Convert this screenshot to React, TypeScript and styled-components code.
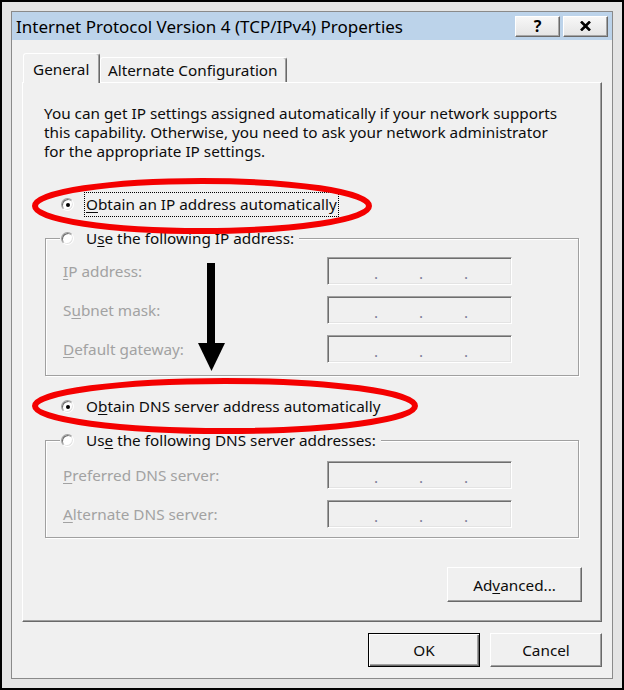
import React from "react";
import styled, { createGlobalStyle, css } from "styled-components";

const FONT = `"Noto Sans", "Open Sans", "DejaVu Sans", sans-serif`;

const GlobalStyle = createGlobalStyle`
  html, body { margin: 0; padding: 0; background: #fff; }
  * { box-sizing: border-box; }
`;

const Frame = styled.div`
  position: relative;
  width: 624px;
  height: 690px;
  border: 2px solid #000;
  background: #e4e4e4;
  padding: 9px;
  font-family: ${FONT};
  font-size: 15.3px;
  color: #0c0c0c;
`;

const Window = styled.div`
  height: 100%;
  display: flex;
  flex-direction: column;
  border: 1px solid #8a8a8a;
  background: #f0f0f0;
`;

const TitleBar = styled.div`
  height: 28px;
  flex: none;
  display: flex;
  align-items: center;
  justify-content: space-between;
  padding: 0 4px;
  background: #bcd3ea;
`;

const Title = styled.span`
  font-size: 17px;
  color: #000;
  white-space: nowrap;
`;

const CaptionButtons = styled.div`
  display: flex;
  gap: 3px;
`;

const CaptionButton = styled.div`
  width: 45px;
  height: 21px;
  display: flex;
  align-items: center;
  justify-content: center;
  background: linear-gradient(#f7f7f7, #e4e4e4);
  border: 1px solid;
  border-color: #fff #6a6a6a #6a6a6a #fff;
  box-shadow: inset -1px -1px #a6a6a6;
  font: bold 16px ${FONT};
  color: #000;
  line-height: 1;
`;

const Body = styled.div`
  flex: 1;
  display: flex;
  flex-direction: column;
  padding: 13px 10px 11px 10px;
`;

const TabStrip = styled.div`
  display: flex;
  align-items: flex-end;
  height: 29px;
  padding-left: 1px;
  position: relative;
  z-index: 1;
`;

const Tab = styled.div<{ $active?: boolean }>`
  display: flex;
  align-items: center;
  white-space: nowrap;
  background: #f0f0f0;
  border: 1px solid;
  border-bottom: none;
  border-color: #fff #696969 transparent #fff;
  box-shadow: inset -1px 0 #a0a0a0;
  border-radius: 3px 3px 0 0;
  ${(p) =>
    p.$active
      ? css`
          width: 77px;
          height: 30px;
          margin-bottom: -1px;
          padding-left: 9px;
        `
      : css`
          width: 187px;
          height: 25px;
          padding-left: 7px;
        `}
`;

const Panel = styled.div`
  height: 540px;
  flex: none;
  display: flex;
  flex-direction: column;
  border: 1px solid;
  border-color: #fff #696969 #696969 #fff;
  box-shadow: inset -1px -1px #a0a0a0;
  padding: 21px 19px 19px 21px;
`;

const Intro = styled.div`
  line-height: 19px;
`;

const Line = styled.span`
  display: block;
  white-space: nowrap;
`;

const RadioRow = styled.div<{ $legend?: boolean; $mt?: number }>`
  display: flex;
  align-items: center;
  gap: 10px;
  height: 25px;
  white-space: nowrap;
  ${(p) =>
    p.$legend
      ? css`
          width: fit-content;
          margin: -13px 0 0 -3px;
          padding: 0 3px 0 1px;
          background: #f0f0f0;
        `
      : css`
          margin: ${p.$mt ?? 0}px 0 0 17px;
        `}
`;

const RadioCircle = styled.span<{ $checked?: boolean }>`
  width: 13px;
  height: 13px;
  flex: none;
  border-radius: 50%;
  background: #fff;
  border: 1px solid;
  border-color: #a0a0a0 #fff #fff #a0a0a0;
  box-shadow: inset 1px 1px #6e6e6e, inset -1px -1px #e3e3e3;
  display: flex;
  align-items: center;
  justify-content: center;
  &::after {
    content: "";
    width: 4px;
    height: 4px;
    border-radius: 50%;
    background: #000;
    display: ${(p) => (p.$checked ? "block" : "none")};
  }
`;

const RadioLabel = styled.span<{ $focus?: boolean }>`
  display: inline-block;
  height: 25px;
  line-height: 23px;
  padding: 0 1px;
  border: 1px dotted ${(p) => (p.$focus ? "#000" : "transparent")};
`;

const Key = styled.u`
  text-decoration: underline;
  text-underline-offset: 2px;
  text-decoration-thickness: 1px;
`;

const GroupBox = styled.div<{ $mt: number; $pb: number }>`
  margin: ${(p) => p.$mt}px 0 0 1px;
  width: 534px;
  border: 1px solid #a0a0a0;
  box-shadow: inset 1px 1px #fff, 1px 1px #fff;
  padding: 0 0 ${(p) => p.$pb}px 17px;
`;

const FieldGrid = styled.div<{ $mt: number }>`
  margin-top: ${(p) => p.$mt}px;
  display: grid;
  grid-template-columns: 264px 185px;
  row-gap: 11px;
  align-items: center;
`;

const FieldLabel = styled.span`
  color: #a2a2a2;
  white-space: nowrap;
`;

const IpField = styled.div`
  height: 28px;
  width: 185px;
  display: flex;
  align-items: center;
  gap: 41px;
  padding: 5px 0 0 46px;
  background: #f0f0f0;
  border: 1px solid;
  border-color: #a0a0a0 #fff #fff #a0a0a0;
  box-shadow: inset 1px 1px #6e6e6e, inset -1px -1px #e3e3e3;
`;

const Dot = styled.span`
  width: 4px;
  text-align: center;
  color: #7d7d98;
  line-height: 1;
`;

const Button = styled.div<{ $default?: boolean; $w: number; $h: number }>`
  width: ${(p) => p.$w}px;
  height: ${(p) => p.$h}px;
  display: flex;
  align-items: center;
  justify-content: center;
  background: #f0f0f0;
  white-space: nowrap;
  ${(p) =>
    p.$default
      ? css`
          border: 1px solid #000;
          box-shadow: inset 1px 1px #fff, inset -1px -1px #696969,
            inset -2px -2px #a0a0a0;
        `
      : css`
          border: 1px solid;
          border-color: #fff #696969 #696969 #fff;
          box-shadow: inset -1px -1px #a0a0a0;
        `}
`;

const ButtonText = styled.span`
  white-space: pre;
`;

const AdvancedButton = styled(Button)`
  margin-top: 29px;
  align-self: flex-end;
`;

const ButtonRow = styled.div`
  margin-top: 11px;
  display: flex;
  justify-content: flex-end;
  gap: 10px;
`;

const Annotations = styled.svg`
  position: absolute;
  top: -2px;
  left: -2px;
  width: 624px;
  height: 690px;
  pointer-events: none;
`;

const Ip = () => (
  <IpField>
    <Dot>.</Dot>
    <Dot>.</Dot>
    <Dot>.</Dot>
  </IpField>
);

export default function App() {
  return (
    <>
      <GlobalStyle />
      <Frame>
        <Window>
          <TitleBar>
            <Title>Internet Protocol Version 4 (TCP/IPv4) Properties</Title>
            <CaptionButtons>
              <CaptionButton>?</CaptionButton>
              <CaptionButton>
                <svg width="11" height="10" viewBox="0 0 11 10">
                  <path d="M1 0.5 L10 9.5 M10 0.5 L1 9.5" stroke="#000" strokeWidth="2.6" />
                </svg>
              </CaptionButton>
            </CaptionButtons>
          </TitleBar>
          <Body>
            <TabStrip>
              <Tab $active>General</Tab>
              <Tab>Alternate Configuration</Tab>
            </TabStrip>
            <Panel>
              <Intro>
                <Line>You can get IP settings assigned automatically if your network supports</Line>
                <Line>this capability. Otherwise, you need to ask your network administrator</Line>
                <Line>for the appropriate IP settings.</Line>
              </Intro>

              <RadioRow $mt={31}>
                <RadioCircle $checked />
                <RadioLabel $focus>
                  <Key>O</Key>btain an IP address automatically
                </RadioLabel>
              </RadioRow>

              <GroupBox $mt={21} $pb={12}>
                <RadioRow $legend>
                  <RadioCircle />
                  <RadioLabel>
                    U<Key>s</Key>e the following IP address:
                  </RadioLabel>
                </RadioRow>
                <FieldGrid $mt={6}>
                  <FieldLabel>
                    <Key>I</Key>P address:
                  </FieldLabel>
                  <Ip />
                  <FieldLabel>
                    S<Key>u</Key>bnet mask:
                  </FieldLabel>
                  <Ip />
                  <FieldLabel>
                    <Key>D</Key>efault gateway:
                  </FieldLabel>
                  <Ip />
                </FieldGrid>
              </GroupBox>

              <RadioRow $mt={18}>
                <RadioCircle $checked />
                <RadioLabel>
                  O<Key>b</Key>tain DNS server address automatically
                </RadioLabel>
              </RadioRow>

              <GroupBox $mt={21} $pb={9}>
                <RadioRow $legend>
                  <RadioCircle />
                  <RadioLabel>
                    Us<Key>e</Key> the following DNS server addresses:
                  </RadioLabel>
                </RadioRow>
                <FieldGrid $mt={8}>
                  <FieldLabel>
                    <Key>P</Key>referred DNS server:
                  </FieldLabel>
                  <Ip />
                  <FieldLabel>
                    <Key>A</Key>lternate DNS server:
                  </FieldLabel>
                  <Ip />
                </FieldGrid>
              </GroupBox>

              <AdvancedButton $w={135} $h={35}>
                <ButtonText>
                  Ad<Key>v</Key>anced...
                </ButtonText>
              </AdvancedButton>
            </Panel>
            <ButtonRow>
              <Button $default $w={112} $h={34}>
                OK
              </Button>
              <Button $w={112} $h={34}>
                Cancel
              </Button>
            </ButtonRow>
          </Body>
        </Window>
        <Annotations viewBox="0 0 624 690">
          <ellipse cx="202" cy="206" rx="167" ry="25" fill="none" stroke="#f40000" strokeWidth="6" />
          <ellipse cx="225" cy="406" rx="190" ry="25" fill="none" stroke="#f40000" strokeWidth="6" />
          <rect x="207" y="263" width="8" height="81" fill="#000" />
          <polygon points="198,343 225,343 211.5,371" fill="#000" />
        </Annotations>
      </Frame>
    </>
  );
}
